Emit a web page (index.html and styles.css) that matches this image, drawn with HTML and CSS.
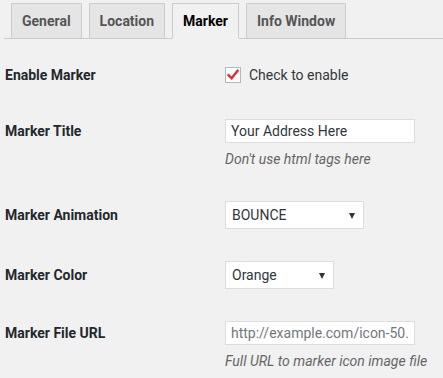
FILE: index.html
```html
<!DOCTYPE html>
<html>
<head>
    <title>Map Settings - Marker</title>
    <link rel="stylesheet" href="styles.css">
</head>
<body>
    <div class="nav-tab-wrapper">
        <a class="nav-tab">General</a>
        <a class="nav-tab">Location</a>
        <a class="nav-tab nav-tab-active">Marker</a>
        <a class="nav-tab">Info Window</a>
    </div>

    <div class="form-table">
        <div class="row">
            <div class="label">Enable Marker</div>
            <div class="field">
                <label class="check">
                    <span class="checkbox">
                        <svg width="12" height="12" viewBox="0 0 12 12">
                            <path d="M1.5 6.2 L4.6 9.2 L10.6 1.8" fill="none" stroke="#dc3232" stroke-width="2.4" stroke-linecap="square"/>
                        </svg>
                    </span>
                    Check to enable
                </label>
            </div>
        </div>

        <div class="row">
            <div class="label">Marker Title</div>
            <div class="field">
                <input class="text-input" type="text" value="Your Address Here">
                <p class="description">Don't use html tags here</p>
            </div>
        </div>

        <div class="row">
            <div class="label tall">Marker Animation</div>
            <div class="field">
                <span class="select-wrap wide">
                    <select><option>BOUNCE</option><option>DROP</option><option>NONE</option></select>
                </span>
            </div>
        </div>

        <div class="row">
            <div class="label tall">Marker Color</div>
            <div class="field">
                <span class="select-wrap">
                    <select><option>Orange</option><option>Red</option><option>Blue</option></select>
                </span>
            </div>
        </div>

        <div class="row">
            <div class="label">Marker File URL</div>
            <div class="field">
                <input class="text-input" type="text" placeholder="http://example.com/icon-50.png">
                <p class="description">Full URL to marker icon image file</p>
            </div>
        </div>
    </div>
</body>
</html>
```

FILE: styles.css
```css
body {
    margin: 0;
    background: #f1f1f1;
    font-family: Roboto, "Liberation Sans", Arial, sans-serif;
    font-size: 14px;
    color: #23282d;
}
.nav-tab-wrapper {
    display: flex;
    margin-left: 4px;
    padding: 3px 0 0 0;
    border-bottom: 1px solid #ccc;
}
.nav-tab {
    display: block;
    margin: 0 0 -1px 7px;
    padding: 5px 10px;
    line-height: 24px;
    font-size: 14px;
    font-weight: bold;
    color: #555;
    background: #e5e5e5;
    border: 1px solid #ccc;
}
.nav-tab-active {
    color: #000;
    background: #f1f1f1;
    border-bottom-color: #f1f1f1;
}
.form-table {
    margin-top: 8px;
    padding-left: 5px;
}
.row {
    display: flex;
    align-items: flex-start;
    padding: 16px 0;
}
.label {
    width: 220px;
    flex: none;
    font-weight: bold;
    line-height: 24px;
}
.label.tall {
    line-height: 28px;
}
.field {
    flex: 1;
}
.check {
    display: flex;
    align-items: center;
    height: 24px;
    gap: 8px;
    color: #32373c;
}
.checkbox {
    width: 14px;
    height: 14px;
    border: 1px solid #b4b9be;
    background: #fff;
    display: flex;
    align-items: center;
    justify-content: center;
}
.text-input {
    box-sizing: border-box;
    width: 190px;
    height: 24px;
    margin: 0;
    padding: 0 5px;
    border: 1px solid #ddd;
    background: #fff;
    font-family: inherit;
    font-size: 14px;
    color: #32373c;
}
.text-input::placeholder {
    color: #72777c;
}
.description {
    margin: 6px 0 0 0;
    line-height: 20px;
    font-size: 14px;
    font-style: italic;
    color: #666;
}
.select-wrap {
    position: relative;
    display: inline-block;
}
.select-wrap select {
    box-sizing: border-box;
    width: 109px;
    height: 28px;
    margin: 0;
    padding: 0 6px;
    border: 1px solid #ddd;
    background: #fff;
    font-family: inherit;
    font-size: 14px;
    color: #32373c;
    appearance: none;
    -webkit-appearance: none;
    border-radius: 0;
}
.select-wrap.wide select {
    width: 139px;
}
.select-wrap::after {
    content: "";
    position: absolute;
    right: 9px;
    top: 12px;
    border-left: 3px solid transparent;
    border-right: 3px solid transparent;
    border-top: 6px solid #333;
}
```
